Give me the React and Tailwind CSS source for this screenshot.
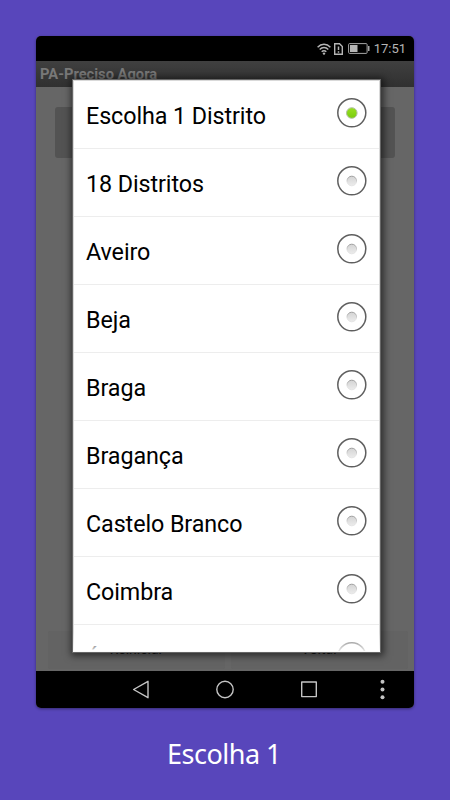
const districts = [
  "Escolha 1 Distrito",
  "18 Distritos",
  "Aveiro",
  "Beja",
  "Braga",
  "Bragança",
  "Castelo Branco",
  "Coimbra",
  "Évora",
];

const Radio = ({ checked }) => (
  <svg className="mt-[17px] shrink-0" width="30" height="30" viewBox="0 0 30 30" fill="none">
    <defs>
      <linearGradient id="dotOn" x1="0" y1="0" x2="0" y2="1">
        <stop offset="0" stopColor="#98e022" />
        <stop offset="1" stopColor="#79cc0c" />
      </linearGradient>
      <linearGradient id="dotOff" x1="0" y1="0" x2="0" y2="1">
        <stop offset="0" stopColor="#d4d4d4" />
        <stop offset="1" stopColor="#ececec" />
      </linearGradient>
      <linearGradient id="dotRim" x1="0" y1="0" x2="0" y2="1">
        <stop offset="0" stopColor="#9b9b9b" />
        <stop offset="0.7" stopColor="#e4e4e4" />
      </linearGradient>
    </defs>
    <circle cx="14.8" cy="14.8" r="14" stroke="#5f5f5f" strokeWidth="1.5" />
    {checked ? (
      <circle cx="14.8" cy="15" r="5.3" fill="url(#dotOn)" stroke="#b3c0a6" />
    ) : (
      <circle cx="14.8" cy="15" r="4.8" fill="url(#dotOff)" stroke="url(#dotRim)" />
    )}
  </svg>
);

const StatusBar = () => (
  <div className="flex h-[25px] shrink-0 items-center justify-end bg-black pr-2 text-[#b5b5b5]">
    <svg className="mr-[3px]" width="14" height="12" viewBox="0 0 14 12" fill="none" stroke="currentColor" strokeWidth="1.4">
      <path d="M.6 4.2C4.2.3 9.8.3 13.4 4.2M2.7 6.5c2.4-2.6 6.2-2.6 8.6 0M4.7 8.7c1.3-1.3 3.3-1.3 4.6 0" />
      <circle cx="7" cy="10.6" r="1.2" fill="currentColor" stroke="none" />
    </svg>
    <svg className="mr-[5px]" width="9" height="12" viewBox="0 0 9 12" fill="none" stroke="currentColor" strokeWidth="1.4">
      <path d="M.7.7h4.8l2.8 2.8v7.8H.7z" />
      <path d="M4.5 3.6v3.5M4.5 8.2v1.5" strokeWidth="1.5" />
    </svg>
    <svg className="mr-1" width="22" height="11" viewBox="0 0 22 11">
      <rect x=".6" y=".6" width="18.5" height="9.8" rx="1" fill="none" stroke="#a5a5a5" />
      <path d="M2 2h7.5v7H2z" fill="currentColor" />
      <path d="M20 3h1.5v5H20z" fill="#a5a5a5" />
    </svg>
    <span className="text-[13px] leading-none">17:51</span>
  </div>
);

const NavBar = () => (
  <div className="h-[37px] shrink-0 bg-black">
    <svg width="378" height="37" viewBox="0 0 378 37" fill="none" stroke="#c4c4c4" strokeWidth="1.4" strokeLinejoin="round">
      <path d="M97.6 18.5 112 10.3v16.4z" />
      <circle cx="189" cy="18.5" r="8.2" />
      <rect x="265.7" y="11" width="14.6" height="14.6" />
      <g fill="#c4c4c4" stroke="none">
        <circle cx="346.5" cy="10.8" r="2" />
        <circle cx="346.5" cy="18.5" r="2" />
        <circle cx="346.5" cy="26.2" r="2" />
      </g>
    </svg>
  </div>
);

const DistrictDialog = () => (
  <div className="absolute left-[36px] top-[43px] h-[574px] w-[309px] overflow-hidden border border-[#666] bg-[#d9d9d9] p-px shadow-[1px_1px_7px_2px_rgba(0,0,0,0.55)]">
    <ul className="h-full overflow-hidden bg-white">
      {districts.map((name, i) => (
        <li
          key={name}
          className="flex h-[68px] justify-between border-b border-[#ededed] pl-3 pr-3"
        >
          <span className="pt-[3.5px] text-[23.3px] leading-[63px] tracking-[-0.08px] text-black">{name}</span>
          <Radio checked={i === 0} />
        </li>
      ))}
    </ul>
    {/* fading edge of the scroll list */}
    <div className="absolute inset-x-0 bottom-0 h-5 bg-linear-to-b from-white/0 to-white/90" />
  </div>
);

const App = () => {
  return (
    <div className="flex h-[800px] w-[450px] flex-col items-center bg-[#5846bb] pt-9 font-['Roboto',sans-serif]">
      <div className="relative flex h-[672px] w-[378px] flex-col overflow-hidden rounded-[5px] bg-[#666] shadow-[0_1px_3px_rgba(0,0,0,0.4)]">
        <StatusBar />
        <div className="h-[26px] shrink-0 bg-linear-to-b from-[#404040] to-[#303030] pl-1 text-[14.7px] font-bold leading-[27px] text-[#787878]">
          PA-Preciso Agora
        </div>
        <div className="flex flex-1 flex-col justify-between pt-5">
          <div className="mx-[19px] h-[51px] rounded-[3px] bg-[#535353]" />
          <div className="mb-0.5 flex gap-1.5 pl-3 pr-1.5 text-sm text-[#111]">
            <div className="h-[38px] flex-1 rounded-xs bg-[#636363] text-center leading-[37px]">Reiniciar</div>
            <div className="h-[38px] flex-1 rounded-xs bg-[#636363] text-center leading-[37px]">Voltar</div>
          </div>
        </div>
        <NavBar />
        <DistrictDialog />
      </div>
      <p className="mt-[27px] pr-0.5 font-['Noto_Sans',sans-serif] text-[27px] leading-[38px] tracking-[-0.5px] text-white">Escolha 1</p>
    </div>
  );
};

export default App;
